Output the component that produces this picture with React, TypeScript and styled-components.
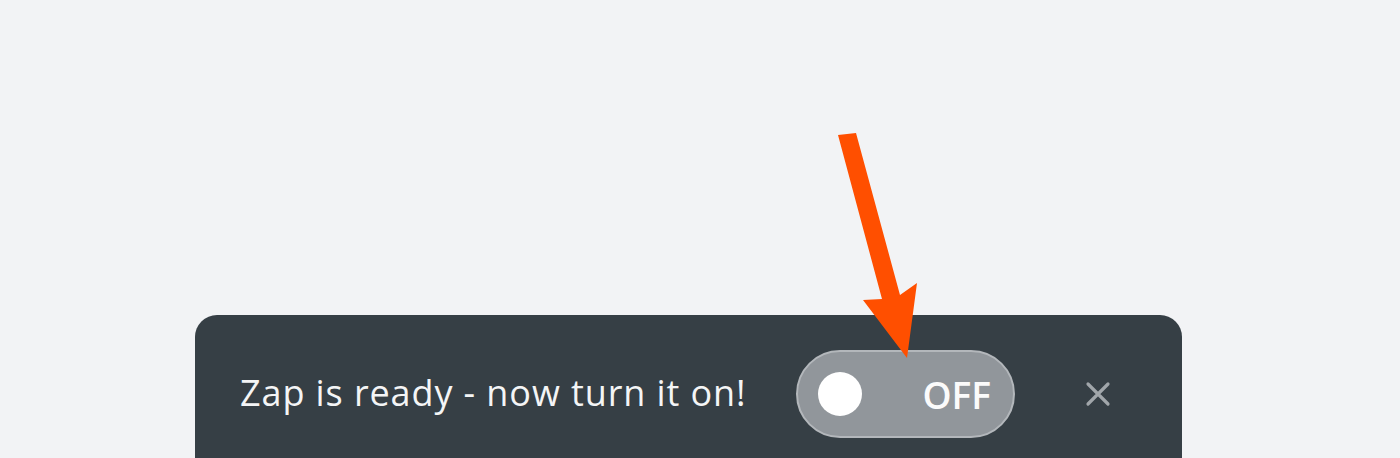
import React from 'react';
import styled, { createGlobalStyle } from 'styled-components';

const GlobalStyle = createGlobalStyle`
  html, body {
    margin: 0;
    padding: 0;
    background: #f2f3f5;
    overflow: hidden;
  }
`;

const Page = styled.div`
  position: relative;
  width: 1400px;
  height: 458px;
  padding: 315px 0 0 195px;
  box-sizing: border-box;
  font-family: 'Open Sans', 'Noto Sans', sans-serif;
  overflow: hidden;
`;

const Banner = styled.div`
  display: flex;
  align-items: flex-start;
  width: 987px;
  height: 200px;
  box-sizing: border-box;
  padding: 35px 0 0 45px;
  background: #363f45;
  border-radius: 22px;
`;

const Message = styled.span`
  width: 511px;
  height: 84px;
  display: flex;
  align-items: center;
  font-size: 36px;
  color: #f4f5f6;
  letter-spacing: 0.9px;
  white-space: nowrap;
  margin-right: 45px;
`;

const Toggle = styled.button<{ on?: boolean }>`
  display: flex;
  align-items: center;
  justify-content: space-between;
  width: 219px;
  height: 88px;
  box-sizing: border-box;
  padding: 0 22px 0 20px;
  border: 2px solid #b3b7bb;
  border-radius: 44px;
  background: ${(props) => (props.on ? '#ff4f00' : '#91969b')};
  cursor: pointer;
`;

const Knob = styled.span`
  width: 44px;
  height: 44px;
  border-radius: 50%;
  background: #ffffff;
`;

const ToggleLabel = styled.span`
  font-family: 'Open Sans', sans-serif;
  font-size: 37px;
  font-weight: 600;
  color: #fbfbfb;
`;

const CloseButton = styled.button`
  display: flex;
  align-items: center;
  justify-content: center;
  width: 40px;
  height: 88px;
  margin-left: 63px;
  padding: 0;
  border: none;
  background: transparent;
  cursor: pointer;
`;

const Pointer = styled.svg`
  position: absolute;
  left: 820px;
  top: 120px;
`;

function ArrowPointer() {
  return (
    <Pointer width="120" height="250" viewBox="0 0 120 250">
      <polygon
        points="18,15 36,13 80,175 97,163 87,238 43,180 62,179"
        fill="#ff4f00"
      />
    </Pointer>
  );
}

export default function App() {
  return (
    <>
      <GlobalStyle />
      <Page>
        <Banner>
          <Message>Zap is ready - now turn it on!</Message>
          <Toggle>
            <Knob />
            <ToggleLabel>OFF</ToggleLabel>
          </Toggle>
          <CloseButton aria-label="Close">
            <svg width="26" height="26" viewBox="0 0 26 26">
              <path
                d="M3 3 L23 23 M23 3 L3 23"
                stroke="#a1a6aa"
                strokeWidth="3.2"
                strokeLinecap="round"
              />
            </svg>
          </CloseButton>
        </Banner>
        <ArrowPointer />
      </Page>
    </>
  );
}
